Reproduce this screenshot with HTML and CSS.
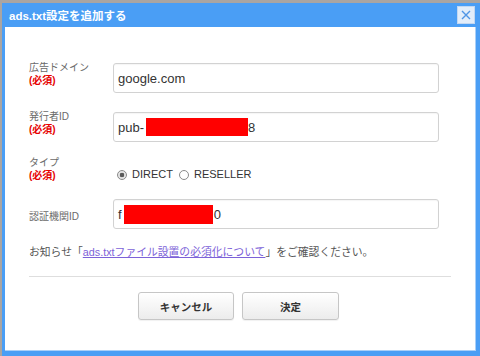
FILE: index.html
```html
<!DOCTYPE html>
<html lang="ja">
<head>
<meta charset="utf-8">
<title>ads.txt設定を追加する</title>
<link rel="stylesheet" href="styles.css">
</head>
<body>
<div class="dialog">
  <div class="titlebar">
    <span class="title">ads.txt設定を追加する</span>
    <button class="close" aria-label="閉じる">
      <svg width="10" height="10" viewBox="0 0 10 10"><path d="M1 1 L9 9 M9 1 L1 9" stroke="#4f95e6" stroke-width="1.4" fill="none"/></svg>
    </button>
  </div>
  <div class="panel">
    <div class="row row-first">
      <div class="label">広告ドメイン<br><span class="req">(必須)</span></div>
      <div class="field">google.com</div>
    </div>
    <div class="row row-second">
      <div class="label">発行者ID<br><span class="req">(必須)</span></div>
      <div class="field">pub-<span class="redact redact-pub"></span>8</div>
    </div>
    <div class="row row-type">
      <div class="label">タイプ<br><span class="req">(必須)</span></div>
      <div class="radios">
        <span class="radio checked"></span><span class="radio-text">DIRECT</span>
        <span class="radio second"></span><span class="radio-text">RESELLER</span>
      </div>
    </div>
    <div class="row row-cert">
      <div class="label">認証機関ID</div>
      <div class="field">f<span class="redact redact-cert"></span>0</div>
    </div>
    <p class="notice">お知らせ「<a class="link" href="#">ads.txtファイル設置の必須化について</a>」をご確認ください。</p>
    <hr class="divider">
    <div class="buttons">
      <button class="btn btn-cancel">キャンセル</button>
      <button class="btn btn-ok">決定</button>
    </div>
  </div>
</div>
</body>
</html>
```

FILE: styles.css
```css
html, body {
  margin: 0;
  padding: 0;
  height: 100%;
  overflow: hidden;
}
body {
  background: #aaa5a2;
  font-family: "Liberation Sans", "Noto Sans CJK JP", sans-serif;
}
.dialog {
  margin: 3px 0 0 2px;
  width: 480px;
  background: #4a9ef5;
  padding-bottom: 10px;
}
.titlebar {
  height: 24px;
  display: flex;
  align-items: center;
  justify-content: space-between;
  padding: 0 7px 0 7px;
  box-sizing: border-box;
}
.title {
  color: #fff;
  font-weight: bold;
  font-size: 11.5px;
}
.close {
  width: 18px;
  height: 18px;
  margin: 0;
  padding: 0;
  border: 1px solid #c2d7f1;
  background: #e2edfa;
  display: flex;
  align-items: center;
  justify-content: center;
  box-sizing: border-box;
}
.close svg { display: block; }
.panel {
  margin: 0 0 0 3px;
  width: 471px;
  height: 324px;
  box-sizing: border-box;
  background: #fff;
  border-right: 1px solid #a9cff8;
  border-bottom: 1px solid #a9cff8;
  padding: 34px 24px 0 24px;
}
.row {
  display: flex;
  align-items: flex-end;
}
.row-second { margin-top: 17px; }
.row-type { margin-top: 14px; }
.row-cert { margin-top: 11px; }
.label {
  width: 84px;
  flex: none;
  font-size: 10px;
  line-height: 13px;
  color: #6a6a6a;
  padding-bottom: 6px;
}
.req {
  color: #e60000;
  font-weight: bold;
}
.field {
  width: 326px;
  height: 30px;
  box-sizing: border-box;
  border: 1px solid #d2d2d2;
  border-radius: 3px;
  box-shadow: inset 0 1px 1px rgba(0,0,0,0.04);
  padding-left: 4px;
  display: flex;
  align-items: center;
  font-size: 13px;
  color: #333;
}
.redact {
  display: inline-block;
  background: #ff0000;
}
.redact-pub {
  width: 102px;
  height: 18px;
  margin-left: 2px;
}
.redact-cert {
  width: 89px;
  height: 19px;
  margin-left: 2px;
  margin-right: 1px;
}
.radios {
  display: flex;
  align-items: center;
  margin-left: 4px;
  padding-bottom: 7px;
  font-size: 11px;
  line-height: 13px;
  color: #333;
}
.radio {
  display: inline-block;
  width: 10px;
  height: 10px;
  box-sizing: border-box;
  border: 1px solid #8a8a8a;
  border-radius: 50%;
  background: #fff;
}
.radio.checked {
  background: radial-gradient(circle, #5a5a5a 0 2px, #e4e4e4 2.6px);
}
.radio.second { margin-left: 6px; }
.radio-text { margin-left: 5px; }
.notice {
  margin: 16px 0 0 0;
  font-size: 10.8px;
  line-height: 14px;
  color: #555;
}
.link {
  color: #7c62d8;
  text-decoration: underline;
}
.divider {
  margin: 17px 0 0 0;
  border: 0;
  height: 1px;
  background: #dedede;
}
.buttons {
  margin-top: 15px;
  padding-right: 3px;
  display: flex;
  justify-content: center;
  gap: 8px;
}
.btn {
  height: 28px;
  box-sizing: border-box;
  border: 1px solid #c6c6c6;
  border-radius: 3px;
  background: linear-gradient(#ffffff, #ececec);
  box-shadow: 0 1px 1px rgba(0,0,0,0.06);
  font-family: "Liberation Sans", "Noto Sans CJK JP", sans-serif;
  font-weight: bold;
  font-size: 10.5px;
  color: #333;
  padding: 0;
}
.btn-cancel { width: 96px; }
.btn-ok { width: 97px; }
```
